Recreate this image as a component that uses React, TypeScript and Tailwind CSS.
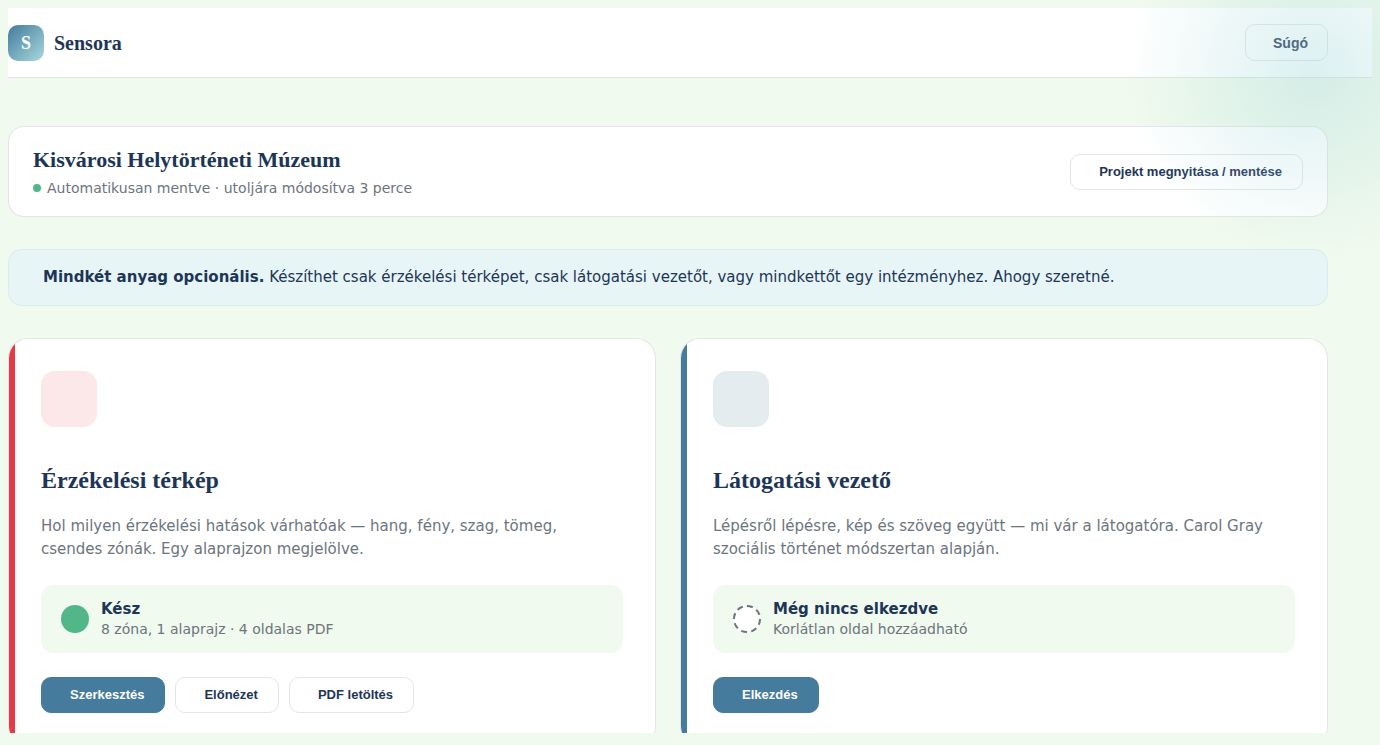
import type { ReactNode } from "react";
import clsx from "clsx";

type Project = {
  title: string;
  description: string;
  status: string;
  detail: string;
  done: boolean;
  accent: string;
  iconBg: string;
  actions: string[];
};

const projects: Project[] = [
  {
    title: "Érzékelési térkép",
    description:
      "Hol milyen érzékelési hatások várhatóak — hang, fény, szag, tömeg, csendes zónák. Egy alaprajzon megjelölve.",
    status: "Kész",
    detail: "8 zóna, 1 alaprajz · 4 oldalas PDF",
    done: true,
    accent: "bg-[#e63946]",
    iconBg: "bg-[#fce7e9]",
    actions: ["Szerkesztés", "Előnézet", "PDF letöltés"],
  },
  {
    title: "Látogatási vezető",
    description:
      "Lépésről lépésre, kép és szöveg együtt — mi vár a látogatóra. Carol Gray szociális történet módszertan alapján.",
    status: "Még nincs elkezdve",
    detail: "Korlátlan oldal hozzáadható",
    done: false,
    accent: "bg-[#457b9d]",
    iconBg: "bg-[#e4ecf0]",
    actions: ["Elkezdés"],
  },
];

function Button({ children, primary }: { children: ReactNode; primary?: boolean }) {
  return (
    <button
      type="button"
      className={clsx(
        "h-9 shrink-0 rounded-[10px] border pr-5 pl-7 font-['Liberation_Sans',sans-serif] text-[13px] font-bold",
        primary
          ? "border-[#457b9d] bg-[#457b9d] text-white"
          : "border-[#e5e5e5] bg-white text-[#1d3557]"
      )}
    >
      {children}
    </button>
  );
}

function ProjectCard({ project }: { project: Project }) {
  return (
    <article className="relative overflow-hidden rounded-[20px] border border-black/10 bg-white p-8">
      {/* Accent stripe */}
      <div className={clsx("absolute inset-y-0 left-0 w-[6px]", project.accent)} />

      <div className={clsx("size-14 rounded-[14px]", project.iconBg)} />

      <h2 className="mt-10 font-['Liberation_Serif',serif] text-2xl leading-[26px] font-bold">
        {project.title}
      </h2>
      <p className="mt-[22px] text-[15px] leading-[23px] text-[#6c757d]">{project.description}</p>

      {/* Status */}
      <div className="mt-6 flex items-center gap-3 rounded-xl bg-[#f1faee] px-5 py-[14px]">
        <div
          className={clsx(
            "size-7 shrink-0 rounded-full",
            project.done ? "bg-[#52b788]" : "border-2 border-dashed border-[#6c757d] bg-white"
          )}
        />
        <div>
          <div className="text-[15px] leading-[21px] font-bold">{project.status}</div>
          <div className="text-sm leading-[19px] text-[#6c757d]">{project.detail}</div>
        </div>
      </div>

      <div className="mt-6 flex flex-wrap gap-[10px]">
        {project.actions.map((action, i) => (
          <Button key={action} primary={i === 0}>
            {action}
          </Button>
        ))}
      </div>
    </article>
  );
}

export default function App() {
  return (
    <div className="relative h-screen overflow-hidden bg-[#f1faee] px-2 pt-2 pb-3 font-['DejaVu_Sans',sans-serif] text-[#1d3557]">
      <div className="h-full overflow-hidden">
        <header className="border-b border-[#e0e6de] bg-white py-4">
          <div className="flex max-w-[1320px] items-center justify-between">
            <a href="#" className="flex items-center gap-[10px] font-['Liberation_Serif',serif] font-bold">
              <span className="flex size-9 items-center justify-center rounded-[10px] bg-linear-135 from-[#457b9d] to-[#a8dadc] text-lg text-white">
                S
              </span>
              <span className="text-xl">Sensora</span>
            </a>
            <button
              type="button"
              className="h-[37px] rounded-[10px] border border-[#e5e5e5] bg-white pr-[19px] pl-[27px] font-['Liberation_Sans',sans-serif] text-sm font-bold"
            >
              Súgó
            </button>
          </div>
        </header>

        <main className="max-w-[1320px] pt-12">
          {/* Project bar */}
          <section className="flex items-center justify-between rounded-2xl border border-black/10 bg-white px-6 py-5">
            <div>
              <h1 className="font-['Liberation_Serif',serif] text-[22px] leading-[26px] font-bold">
                Kisvárosi Helytörténeti Múzeum
              </h1>
              <p className="mt-[7px] flex items-center gap-[6px] text-sm leading-4 text-[#6c757d]">
                <span className="size-2 rounded-full bg-[#52b788]" />
                Automatikusan mentve · utoljára módosítva 3 perce
              </p>
            </div>
            <Button>Projekt megnyitása / mentése</Button>
          </section>

          <p className="mt-8 rounded-[14px] border border-[#a8dadc]/25 bg-[#e8f5f6] py-4 pr-6 pl-[34px] text-[15px] leading-[23px]">
            <strong>Mindkét anyag opcionális.</strong> Készíthet csak érzékelési térképet, csak
            látogatási vezetőt, vagy mindkettőt egy intézményhez. Ahogy szeretné.
          </p>

          <div className="mt-8 grid grid-cols-2 gap-6">
            {projects.map((project) => (
              <ProjectCard key={project.title} project={project} />
            ))}
          </div>
        </main>
      </div>

      {/* Soft glow in the corner */}
      <div className="pointer-events-none absolute -top-[118px] -right-[124px] size-[380px] rounded-full bg-[radial-gradient(circle,#a8dadc_0%,transparent_70%)] opacity-40" />
    </div>
  );
}
